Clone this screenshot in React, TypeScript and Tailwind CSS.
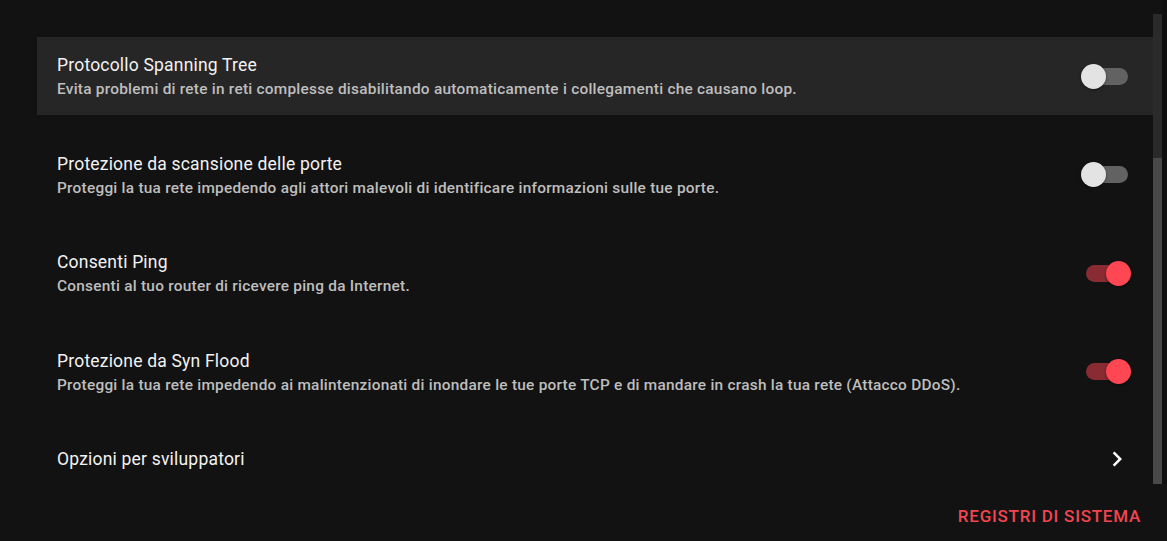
import React from "react";

interface SettingRowProps {
  title: string;
  description?: string;
  checked?: boolean;
  active?: boolean;
  chevron?: boolean;
}

const Toggle: React.FC<{ checked: boolean }> = ({ checked }) => (
  <div className="relative w-[50px] h-[25px] shrink-0">
    <div
      className={`absolute left-[5px] top-[4px] w-[42px] h-[17px] rounded-full ${
        checked ? "bg-[#8a2b33]" : "bg-[#636262]"
      }`}
    />
    <div
      className={`absolute top-0 w-[25px] h-[25px] rounded-full shadow-[0_1px_3px_rgba(0,0,0,0.4)] ${
        checked ? "left-[25px] bg-[#ff4653]" : "left-0 bg-[#e3e3e3]"
      }`}
    />
  </div>
);

const SettingRow: React.FC<SettingRowProps> = ({ title, description, checked = false, active, chevron }) => (
  <div
    className={`flex shrink-0 items-center justify-between pl-[20px] pr-[22px] ${
      description ? "h-[78px]" : "h-[56px]"
    } ${active ? "bg-[#272627]" : ""}`}
  >
    <div className="flex flex-col">
      <span className="text-[17.5px] leading-[26px] tracking-[0.2px] text-[#f2f2f2]">{title}</span>
      {description && (
        <span className="text-[15.4px] leading-[22px] font-medium tracking-[0.25px] text-[#bebebe]">{description}</span>
      )}
    </div>
    {chevron ? (
      <svg viewBox="0 0 24 24" className="w-[30px] h-[30px] -mr-[1px]" fill="#ffffff">
        <path d="M10 6 8.59 7.41 13.17 12l-4.58 4.59L10 18l6-6z" />
      </svg>
    ) : (
      <Toggle checked={checked} />
    )}
  </div>
);

export default function App() {
  return (
    <main
      className="w-[1167px] h-[541px] bg-[#131212] overflow-hidden flex flex-col"
      style={{ fontFamily: "Roboto, 'Liberation Sans', sans-serif" }}
    >
      <div className="flex h-[484px] shrink-0">
        <div className="flex-1 overflow-hidden pl-[37px] pt-[37px] flex flex-col gap-[20.5px]">
          <SettingRow
            active
            title="Protocollo Spanning Tree"
            description="Evita problemi di rete in reti complesse disabilitando automaticamente i collegamenti che causano loop."
          />
          <SettingRow
            title="Protezione da scansione delle porte"
            description="Proteggi la tua rete impedendo agli attori malevoli di identificare informazioni sulle tue porte."
          />
          <SettingRow
            checked
            title="Consenti Ping"
            description="Consenti al tuo router di ricevere ping da Internet."
          />
          <SettingRow
            checked
            title="Protezione da Syn Flood"
            description="Proteggi la tua rete impedendo ai malintenzionati di inondare le tue porte TCP e di mandare in crash la tua rete (Attacco DDoS)."
          />
          <SettingRow chevron title="Opzioni per sviluppatori" />
        </div>
        <div className="w-[9px] mt-[14px] bg-[#2b2a2b] flex flex-col">
          <div className="mt-[144px] flex-1 bg-[#4a4949]" />
        </div>
        <div className="w-[5px] bg-[#0f0f0f]" />
      </div>
      <div className="flex justify-end pr-[26px] pt-[22px]">
        <button className="text-[17px] leading-[20px] font-medium tracking-[0.75px] text-[#f2454f] uppercase">
          Registri di sistema
        </button>
      </div>
    </main>
  );
}
